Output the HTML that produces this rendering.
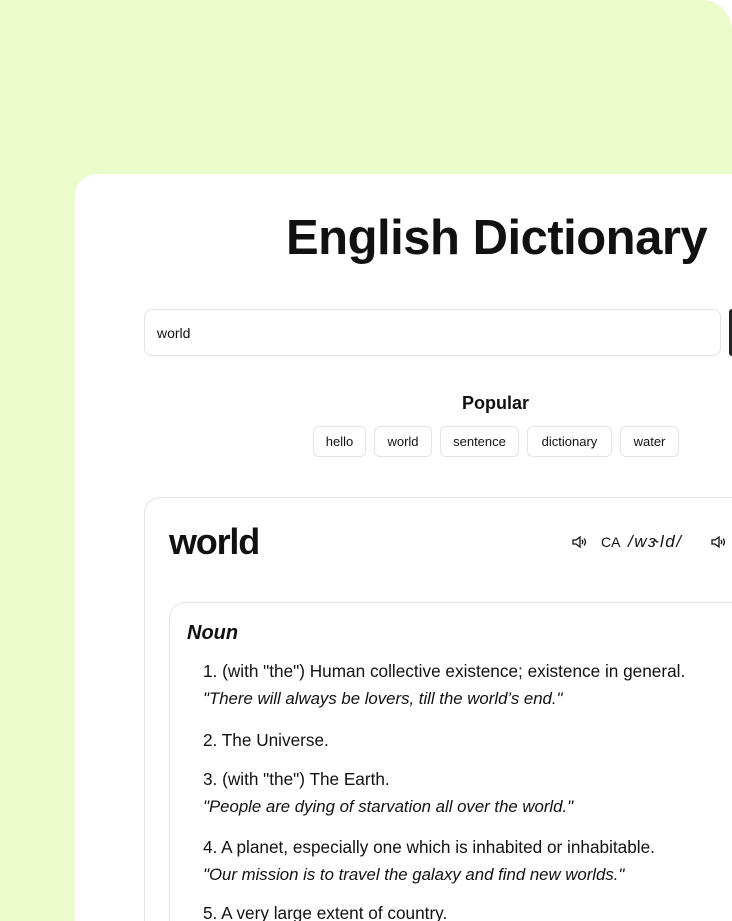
<!DOCTYPE html>
<html><head><meta charset="utf-8"><style>
*{margin:0;padding:0;box-sizing:border-box}
html{width:732px;height:921px;overflow:hidden}
body{width:732px;height:921px;overflow:hidden;background:#fff;font-family:"Liberation Sans",sans-serif;color:#111;position:relative}
.bg{position:absolute;left:0;top:0;width:732px;height:921px;background:#ebfbca;border-top-right-radius:30px}
.card{position:absolute;left:75px;top:174px;width:657px;height:747px;background:#fff;border-top-left-radius:22px}
.t{position:absolute;left:286px;top:210px;font-size:49px;font-weight:bold;letter-spacing:-0.5px;white-space:nowrap}
.in{position:absolute;left:144px;top:309px;width:577px;height:47px;border:1px solid #e3e3e3;border-radius:8px;font-size:14px;padding:15px 12px}
.btn{position:absolute;left:729px;top:309px;width:3px;height:47px;background:#222;border-radius:3px 0 0 3px}
.pop{position:absolute;left:462px;top:393px;font-size:18px;font-weight:bold}
.chip{position:absolute;top:426px;height:31px;border:1px solid #e3e3e3;border-radius:6px;font-size:13px;text-align:center;line-height:29px}
.rc{position:absolute;left:144px;top:497px;width:588px;height:424px;border:1px solid #e3e3e3;border-right:none;border-bottom:none;border-top-left-radius:16px}
.w{position:absolute;left:169px;top:521px;font-size:36px;font-weight:bold;letter-spacing:-1.2px}
.ic{position:absolute;top:535px}
.ca{position:absolute;left:601px;top:534px;font-size:14px}
.ph{position:absolute;left:628px;top:532px;font-size:17px;font-style:italic;letter-spacing:1.5px}
.ic2{position:absolute;left:169px;top:602px;width:563px;height:319px;border:1px solid #e3e3e3;border-right:none;border-bottom:none;border-top-left-radius:16px}
.noun{position:absolute;left:187px;top:622px;font-size:20px;font-weight:bold;font-style:italic}
.l{position:absolute;left:203px;font-size:17.2px;line-height:20px;white-space:nowrap}
.i{font-style:italic;font-size:16.8px}
</style></head><body>
<div class="bg"></div>
<div class="card"></div>
<div class="t">English Dictionary</div>
<div class="in">world</div>
<div class="btn"></div>
<div class="pop">Popular</div>
<div class="chip" style="left:313px;width:53px">hello</div>
<div class="chip" style="left:374px;width:58px">world</div>
<div class="chip" style="left:440px;width:79px">sentence</div>
<div class="chip" style="left:527px;width:85px">dictionary</div>
<div class="chip" style="left:620px;width:59px">water</div>
<div class="rc"></div>
<div class="w">world</div>
<svg class="ic" style="left:571px" width="16" height="14" viewBox="0 0 16 14" fill="none" stroke="#111" stroke-width="1.3"><path d="M2 5h3l4-3v10l-4-3H2z"/><path d="M11 5q1.5 2 0 4M13 3.5q3 3.5 0 7"/></svg>
<div class="ca">CA</div>
<div class="ph">/wɝld/</div>
<svg class="ic" style="left:710px" width="16" height="14" viewBox="0 0 16 14" fill="none" stroke="#111" stroke-width="1.3"><path d="M2 5h3l4-3v10l-4-3H2z"/><path d="M11 5q1.5 2 0 4M13 3.5q3 3.5 0 7"/></svg>
<div class="ic2"></div>
<div class="noun">Noun</div>
<div class="l" style="top:661px">1. (with "the") Human collective existence; existence in general.</div>
<div class="l i" style="top:689px">"There will always be lovers, till the world’s end."</div>
<div class="l" style="top:730px">2. The Universe.</div>
<div class="l" style="top:769px">3. (with "the") The Earth.</div>
<div class="l i" style="top:797px">"People are dying of starvation all over the world."</div>
<div class="l" style="top:837px">4. A planet, especially one which is inhabited or inhabitable.</div>
<div class="l i" style="top:865px">"Our mission is to travel the galaxy and find new worlds."</div>
<div class="l" style="top:903px;height:18px;overflow:hidden">5. A very large extent of country.</div>
</body></html>
